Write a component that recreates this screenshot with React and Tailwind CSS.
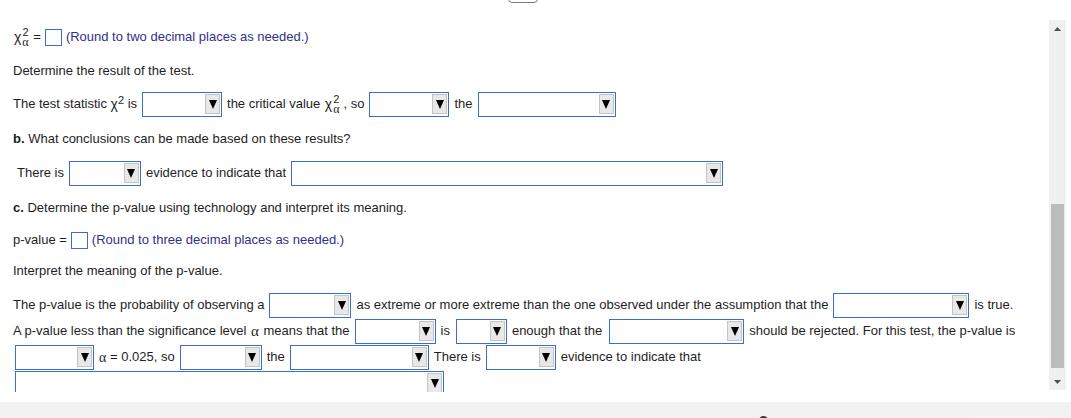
import React from "react";

// Inline answer drop-down: blue outline, grey arrow button on the right.
function Dropdown({ className = "" }) {
  return (
    <span
      className={`mx-[5px] flex h-[25px] shrink-0 items-center justify-end border border-[#3b6cd0] bg-white pr-[1px] ${className}`}
    >
      <span className="flex h-[20px] w-[15px] items-center justify-center border border-[#c4c4c4] bg-[#e8e8e8]">
        <svg width="8" height="9" viewBox="0 0 8 9">
          <polygon points="0,0 8,0 4,9" fill="#000" />
        </svg>
      </span>
    </span>
  );
}

// Small empty text-entry box.
function AnswerBox() {
  return <span className="mx-[4px] inline-block h-[17px] w-[17px] border border-[#3b6cd0] bg-white" />;
}

// χ with a superscript 2 and, when asked, a stacked subscript α.
function Chi({ sub, className = "" }) {
  if (!sub) {
    return (
      <span className={`inline-flex items-center ${className}`}>
        <span className="text-[14px]">χ</span>
        <span className="mb-[9px] text-[11px] leading-[10px]">2</span>
      </span>
    );
  }
  return (
    <span className={`inline-flex items-center px-[1px] ${className}`}>
      <span className="text-[14px]">χ</span>
      <span className="ml-[1px] flex flex-col items-center">
        <span className="text-[11px] leading-[10px]">2</span>
        <span className="font-['Liberation_Serif'] text-[12px] leading-[10px]">α</span>
      </span>
    </span>
  );
}

function Row({ className = "", children }) {
  return <div className={`flex h-[26px] items-center whitespace-pre ${className}`}>{children}</div>;
}

export default function App() {
  return (
    <div className="relative flex h-[418px] w-full flex-col overflow-hidden bg-white font-['Liberation_Sans',Arial,sans-serif] text-[13px] text-[#1e1e1e]">
      {/* tab peeking from the top */}
      <div className="absolute left-[508px] top-[-11px] h-[14px] w-[30px] rounded-[4px] border border-[#7a7a7a] bg-white" />

      <div className="flex h-[402px]">
        <div className="h-[392px] flex-1 overflow-hidden pl-[13px] pt-[24px]">
          <Row>
            <Chi sub />
            <span> =</span>
            <AnswerBox />
            <span className="text-[#30308c]">(Round to two decimal places as needed.)</span>
          </Row>

          <Row className="mt-[8px]">Determine the result of the test.</Row>

          <Row className="mt-[7px]">
            <span>The test statistic </span>
            <Chi />
            <span> is</span>
            <Dropdown className="w-[80px]" />
            <span>the critical value </span>
            <Chi sub className="mr-[3px]" />
            <span>, so</span>
            <Dropdown className="w-[80px]" />
            <span>the</span>
            <Dropdown className="w-[138px]" />
          </Row>

          <Row className="mt-[9px]">
            <span className="font-bold">b. </span>
            <span>What conclusions can be made based on these results?</span>
          </Row>

          <Row className="mt-[8px] pl-[4px]">
            <span>There is</span>
            <Dropdown className="w-[72px]" />
            <span>evidence to indicate that</span>
            <Dropdown className="w-[432px]" />
          </Row>

          <Row className="mt-[9px]">
            <span className="font-bold">c. </span>
            <span>Determine the p-value using technology and interpret its meaning.</span>
          </Row>

          <Row className="mt-[6px]">
            <span>p-value =</span>
            <AnswerBox />
            <span className="text-[#30308c]">(Round to three decimal places as needed.)</span>
          </Row>

          <Row className="mt-[5px]">Interpret the meaning of the p-value.</Row>

          <Row className="mt-[8px]">
            <span>The p-value is the probability of observing a</span>
            <Dropdown className="w-[82px]" />
            <span>as extreme or more extreme than the one observed under the assumption that the</span>
            <Dropdown className="w-[136px]" />
            <span>is true.</span>
          </Row>

          <Row>
            <span>A p-value less than the significance level </span>
            <span className="mx-[1px] font-['Liberation_Serif'] text-[15px]">α</span>
            <span> means that the</span>
            <Dropdown className="w-[81px]" />
            <span>is</span>
            <Dropdown className="ml-[6px] w-[51px]" />
            <span>enough that the</span>
            <Dropdown className="ml-[7px] w-[135px]" />
            <span>should be rejected. For this test, the p-value is</span>
          </Row>

          <Row>
            <Dropdown className="!ml-[2px] w-[79px]" />
            <span className="font-['Liberation_Serif'] text-[14px]">α</span>
            <span> = 0.025, so</span>
            <Dropdown className="w-[82px]" />
            <span>the</span>
            <Dropdown className="w-[139px]" />
            <span>There is</span>
            <Dropdown className="w-[70px]" />
            <span>evidence to indicate that</span>
          </Row>

          <Row>
            <Dropdown className="!ml-[2px] w-[429px]" />
          </Row>
        </div>

        {/* vertical scrollbar */}
        <div className="mr-[5px] mt-[20px] flex h-[370px] w-[17px] flex-col items-center bg-[#f0f0f0]">
          <div className="flex h-[17px] items-center justify-center">
            <svg width="7" height="4" viewBox="0 0 7 4">
              <polygon points="0,4 7,4 3.5,0" fill="#505050" />
            </svg>
          </div>
          <div className="flex-1" />
          <div className="h-[164px] w-[13px] bg-[#bcbcbc]" />
          <div className="h-[5px]" />
          <div className="flex h-[17px] items-center justify-center">
            <svg width="7" height="4" viewBox="0 0 7 4">
              <polygon points="0,0 7,0 3.5,4" fill="#505050" />
            </svg>
          </div>
        </div>
      </div>

      {/* footer bar */}
      <div className="relative h-[16px] bg-[#f2f2f2]">
        <div className="absolute left-[759px] top-[14px] h-[9px] w-[9px] rounded-full bg-[#3a3a3a]" />
        <div className="absolute left-[975px] top-[15px] h-[4px] w-[70px] bg-[#f8f8f8]" />
      </div>
    </div>
  );
}
